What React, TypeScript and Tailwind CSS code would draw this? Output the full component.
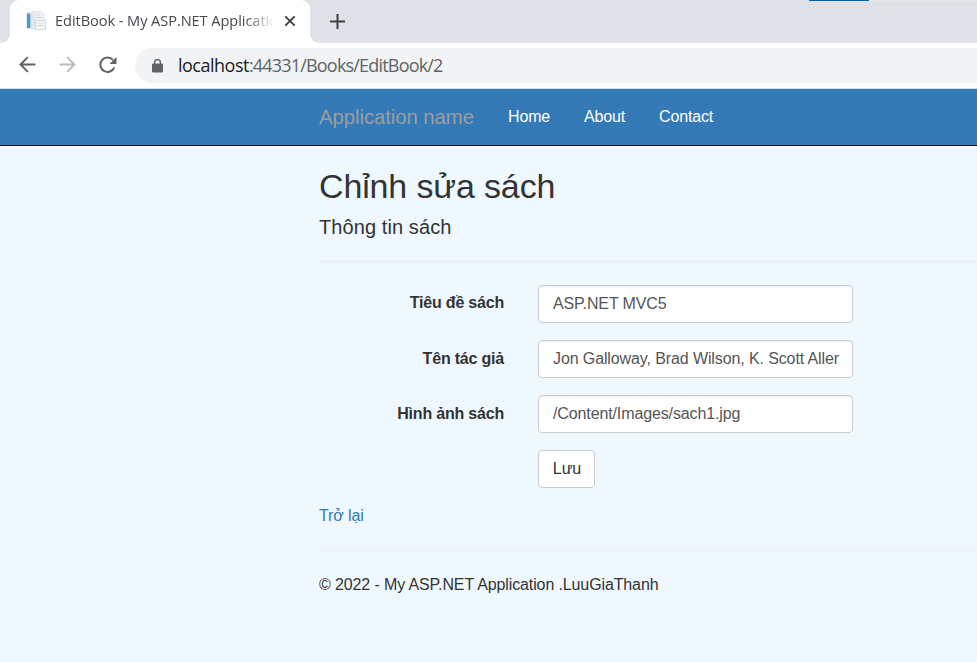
import React from "react";

const fields = [
  { label: "Tiêu đề sách", value: "ASP.NET MVC5", tracking: "tracking-[-0.12px]", offset: "pt-[6px]" },
  { label: "Tên tác giả", value: "Jon Galloway, Brad Wilson, K. Scott Aller", tracking: "tracking-[-0.11px]", offset: "pt-[7px]" },
  { label: "Hình ảnh sách", value: "/Content/Images/sach1.jpg", tracking: "tracking-[-0.12px]", offset: "pt-[7px]" },
];

function Favicon() {
  return (
    <svg width="20" height="20" viewBox="0 0 20 20" className="shrink-0">
      <path d="M.5 1.5h5v16h-5z" fill="#f5f7fa" stroke="#e6e9ed" />
      <rect x="1" y="2.5" width="3.4" height="14.5" fill="#4c9ad2" />
      <path d="M6 .7h9l3 2.8v14.5H6z" fill="#eef1f5" stroke="#d3d8de" strokeWidth=".8" />
      <path d="M8.2 2.5v13M10 4h4M10 6.5h6" stroke="#d6dbe2" />
      <path d="M9.5 9.5h9.8v9.3H9.5z" fill="#f7f8fb" stroke="#c9ced8" strokeWidth=".8" />
      <path d="M11 12h7" stroke="#d6dae3" />
      <path d="M11.5 14.5h6" stroke="#c6cbd7" />
    </svg>
  );
}

function BrowserChrome() {
  return (
    <div className="font-['Open_Sans','Noto_Sans',sans-serif]">
      <div className="relative flex h-[43px] bg-[#dee1e6]">
        <div className="absolute left-[809px] top-0 h-px w-[60px] bg-[#0060b1]" />
        <div className="absolute left-[869px] top-0 h-px w-[108px] bg-[#e6e6e6]" />
        <div className="flex w-[10px] items-end bg-white">
          <div className="h-[43px] w-[10px] rounded-br-[9px] bg-[#dee1e6]" />
        </div>
        <div className="flex w-[300px] rounded-t-[9px] bg-white pl-4">
          <div className="pt-[11px]"><Favicon /></div>
          <div className="ml-[9px] mt-[10px] w-[220px] overflow-hidden whitespace-nowrap text-[14.6px] leading-5 tracking-[-0.07px] text-[#45494d] [mask-image:linear-gradient(to_right,black_190px,transparent_220px)]">
            EditBook - My ASP.NET Applicatio
          </div>
          <svg width="12" height="12" viewBox="0 0 12 12" className="ml-[9px] mt-[15px]">
            <path d="M1.3 1.3l9.4 9.4M10.7 1.3l-9.4 9.4" stroke="#3c4043" strokeWidth="1.9" />
          </svg>
        </div>
        <div className="flex flex-1 bg-white">
          <div className="flex-1 rounded-bl-[9px] bg-[#dee1e6] pl-5 pt-[14px]">
            <svg width="15" height="15" viewBox="0 0 15 15">
              <path d="M7.5 0v15M0 7.5h15" stroke="#3c4043" strokeWidth="2" />
            </svg>
          </div>
        </div>
      </div>
      <div className="flex h-[46px] items-start border-b border-[#d9dbde] bg-white pl-[19px] pt-[5px]">
        <svg width="17" height="17" viewBox="0 0 17 17" className="mt-[8px]" fill="none" stroke="#5f6368" strokeWidth="1.9">
          <path d="M16.5 8.5H1.8M8.8 1.2L1.5 8.5l7.3 7.3" />
        </svg>
        <svg width="17" height="17" viewBox="0 0 17 17" className="ml-[23px] mt-[8px]" fill="none" stroke="#babcbe" strokeWidth="1.9">
          <path d="M.5 8.5h14.7M8.2 1.2l7.3 7.3-7.3 7.3" />
        </svg>
        <svg width="18" height="18" viewBox="0 0 18 18" className="ml-[23px] mt-[8px]" fill="none">
          <path d="M15.3 11.3A7.2 7.2 0 1 1 14 4" stroke="#5f6368" strokeWidth="2" />
          <path d="M17.5 1v7h-7z" fill="#5f6368" />
        </svg>
        <div className="ml-[18px] flex h-[35px] flex-1 items-center rounded-l-full bg-[#f1f3f4] pl-[17px]">
          <svg width="11" height="14" viewBox="0 0 11 14" className="mt-px">
            <rect y="4.5" width="11" height="9" rx="1.2" fill="#5f6368" />
            <path d="M2.6 5.5V3.5a2.9 2.9 0 0 1 5.8 0v2" fill="none" stroke="#5f6368" strokeWidth="1.4" />
          </svg>
          <div className="-mt-px ml-[15px] whitespace-nowrap text-[18px] leading-6 tracking-[-0.81px] text-[#5f6368]">
            <span className="tracking-[-0.5px] text-[#202124]">localhost</span>:44331/Books/EditBook/2
          </div>
        </div>
      </div>
    </div>
  );
}

export default function App() {
  return (
    <div className="h-[662px] w-[977px] overflow-hidden bg-[#f0f8ff] font-['Liberation_Sans',Arial,sans-serif] text-[16px] text-[#333]">
      <BrowserChrome />
      <nav className="flex h-[57px] items-center whitespace-nowrap border-b border-[#080808] bg-[#337ab7] pl-[319px] tracking-[-0.15px] text-white">
        <a className="w-[189px] text-[20.3px] tracking-[-0.04px] text-[#9d9d9d]">Application name</a>
        <a className="w-[76px]">Home</a>
        <a className="w-[75px]">About</a>
        <a>Contact</a>
      </nav>
      <main className="whitespace-nowrap pl-[319px]">
        <h2 className="pt-5 text-[34px] leading-10 tracking-[-0.14px]">Chỉnh sửa sách</h2>
        <h4 className="mt-[9px] text-[20px] leading-6 tracking-[0.09px]">Thông tin sách</h4>
        <hr className="mt-[22px] border-[#eee]" />
        <form className="mt-[23px] flex flex-col gap-[17px]">
          {fields.map((field) => (
            <div key={field.label} className="flex h-[38px]">
              <label className={`w-[185px] text-right font-bold leading-6 tracking-[-0.2px] ${field.offset}`}>{field.label}</label>
              <div className={`ml-[34px] flex w-[315px] items-center rounded-[4px] border border-[#ccc] bg-white pb-px pl-[14px] text-[#555] shadow-[inset_0_1px_1px_rgba(0,0,0,0.075)] ${field.tracking}`}>
                {field.value}
              </div>
            </div>
          ))}
          <div className="pl-[219px]">
            <button type="button" className="flex h-[38px] w-[57px] items-center justify-center rounded-[4px] border border-[#ccc] bg-white pb-px pl-px">Lưu</button>
          </div>
        </form>
        <a className="mt-[16px] block leading-6 tracking-[-0.12px] text-[#337ab7]">Trở lại</a>
        <hr className="mt-[22px] border-[#eee]" />
        <p className="mt-[22px] leading-6 tracking-[-0.12px]">© 2022 - My ASP.NET Application .LuuGiaThanh</p>
      </main>
    </div>
  );
}
